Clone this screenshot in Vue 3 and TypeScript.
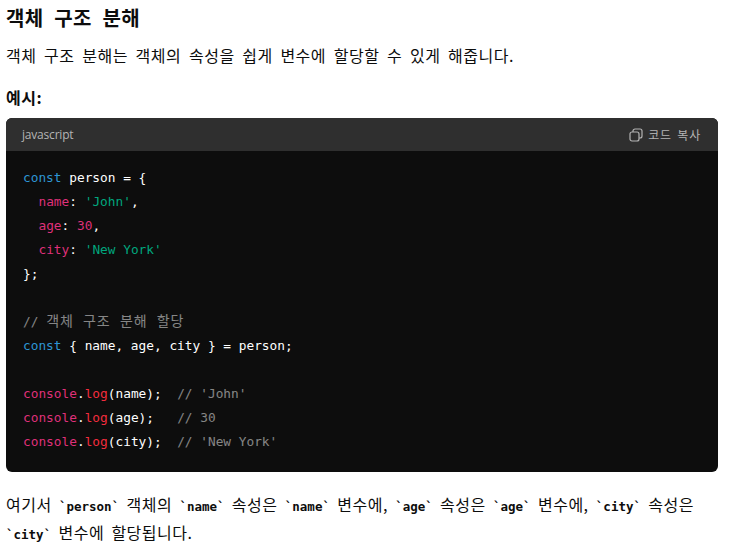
<script setup lang="ts">
type Tok = { t: string; c?: string }
const lines: Tok[][] = [
  [{ t: 'const', c: 'kw' }, { t: ' person = {' }],
  [{ t: '  ' }, { t: 'name', c: 'prop' }, { t: ': ' }, { t: "'John'", c: 'str' }, { t: ',' }],
  [{ t: '  ' }, { t: 'age', c: 'prop' }, { t: ': ' }, { t: '30', c: 'num' }, { t: ',' }],
  [{ t: '  ' }, { t: 'city', c: 'prop' }, { t: ': ' }, { t: "'New York'", c: 'str' }],
  [{ t: '};' }],
  [{ t: ' ' }],
  [{ t: '// ', c: 'cm' }, { t: '객체 구조 분해 할당', c: 'cm ko' }],
  [{ t: 'const', c: 'kw' }, { t: ' { name, age, city } = person;' }],
  [{ t: ' ' }],
  [{ t: 'console', c: 'prop' }, { t: '.' }, { t: 'log', c: 'fn' }, { t: '(name);  ' }, { t: "// 'John'", c: 'cm' }],
  [{ t: 'console', c: 'prop' }, { t: '.' }, { t: 'log', c: 'fn' }, { t: '(age);   ' }, { t: '// 30', c: 'cm' }],
  [{ t: 'console', c: 'prop' }, { t: '.' }, { t: 'log', c: 'fn' }, { t: '(city);  ' }, { t: "// 'New York'", c: 'cm' }],
]
</script>

<template>
  <main class="page">
    <h3 class="title">객체 구조 분해</h3>
    <p class="para intro">객체 구조 분해는 객체의 속성을 쉽게 변수에 할당할 수 있게 해줍니다.</p>
    <p class="para label"><strong>예시:</strong></p>
    <section class="block">
      <header class="bar">
        <span class="lang">javascript</span>
        <button class="copy" type="button">
          <svg width="14" height="14" viewBox="0 0 14 14" fill="none" stroke="currentColor" stroke-width="1.2">
            <rect x="1" y="4" width="9" height="9" rx="2" />
            <path d="M4 4V3a2 2 0 0 1 2-2h5a2 2 0 0 1 2 2v5a2 2 0 0 1-2 2h-1" />
          </svg>
          <span class="copy-label">코드 복사</span>
        </button>
      </header>
      <pre class="code"><code><span v-for="(line, i) in lines" :key="i" class="line"><span v-for="(tok, j) in line" :key="j" :class="tok.c">{{ tok.t }}</span></span></code></pre>
    </section>
    <p class="para outro">여기서 <code class="ic">`person`</code> 객체의 <code class="ic">`name`</code> 속성은 <code class="ic">`name`</code> 변수에, <code class="ic">`age`</code> 속성은 <code class="ic">`age`</code> 변수에, <code class="ic">`city`</code> 속성은 <code class="ic">`city`</code> 변수에 할당됩니다.</p>
  </main>
</template>

<style scoped>
.page {
  width: 712px;
  padding: 0 11px 0 6px;
  color: #0d0d0d;
  font-family: "Noto Sans CJK KR", "Noto Sans", sans-serif;
  font-size: 16px;
  line-height: 28px;
}
.title {
  margin: 4px 0 0;
  font-size: 20px;
  font-weight: 700;
  line-height: 28px;
  letter-spacing: 0.3px;
  word-spacing: 6px;
}
.para {
  margin: 0;
  font-size: 16px;
  letter-spacing: 0.5px;
  word-spacing: 3.6px;
}
.intro {
  margin-top: 9px;
}
.label {
  margin-top: 14px;
}
.label strong {
  font-weight: 700;
}
.block {
  margin-top: 7px;
  background: #0d0d0d;
  border-radius: 6px;
  overflow: hidden;
}
.bar {
  display: flex;
  align-items: center;
  justify-content: space-between;
  height: 33px;
  padding: 1px 16px 0;
  box-sizing: border-box;
  background: #2f2f2f;
  color: #b4b4b4;
  font-size: 12px;
  line-height: 16px;
}
.lang {
  font-family: "Open Sans", sans-serif;
  letter-spacing: -0.2px;
}
.copy {
  display: flex;
  align-items: center;
  gap: 5px;
  padding: 0;
  border: 0;
  background: none;
  color: #b4b4b4;
  font: inherit;
}
.copy-label {
  letter-spacing: 0.8px;
  word-spacing: 2px;
  margin-right: 1px;
}
.code {
  margin: 0;
  padding: 15px 16px 18px 17px;
  color: #fff;
  font-family: "DejaVu Sans Mono", "Noto Sans CJK KR", monospace;
  font-size: 12.8px;
  line-height: 24px;
}
.code code {
  font: inherit;
}
.line {
  display: block;
  height: 24px;
  white-space: pre;
}
.kw { color: #2e95d3; }
.prop { color: #df3079; }
.fn { color: #f22c3d; }
.str { color: #00a67d; }
.num { color: #df3079; }
.cm { color: #ffffff80; }
.ko {
  font-size: 14px;
  line-height: 1;
  letter-spacing: 0.9px;
}
.outro {
  margin-top: 18px;
  word-spacing: 3.2px;
}
.ic {
  font-family: "DejaVu Sans Mono", monospace;
  font-size: 12.5px;
  font-weight: 700;
  line-height: 1;
  letter-spacing: 0;
}
</style>
